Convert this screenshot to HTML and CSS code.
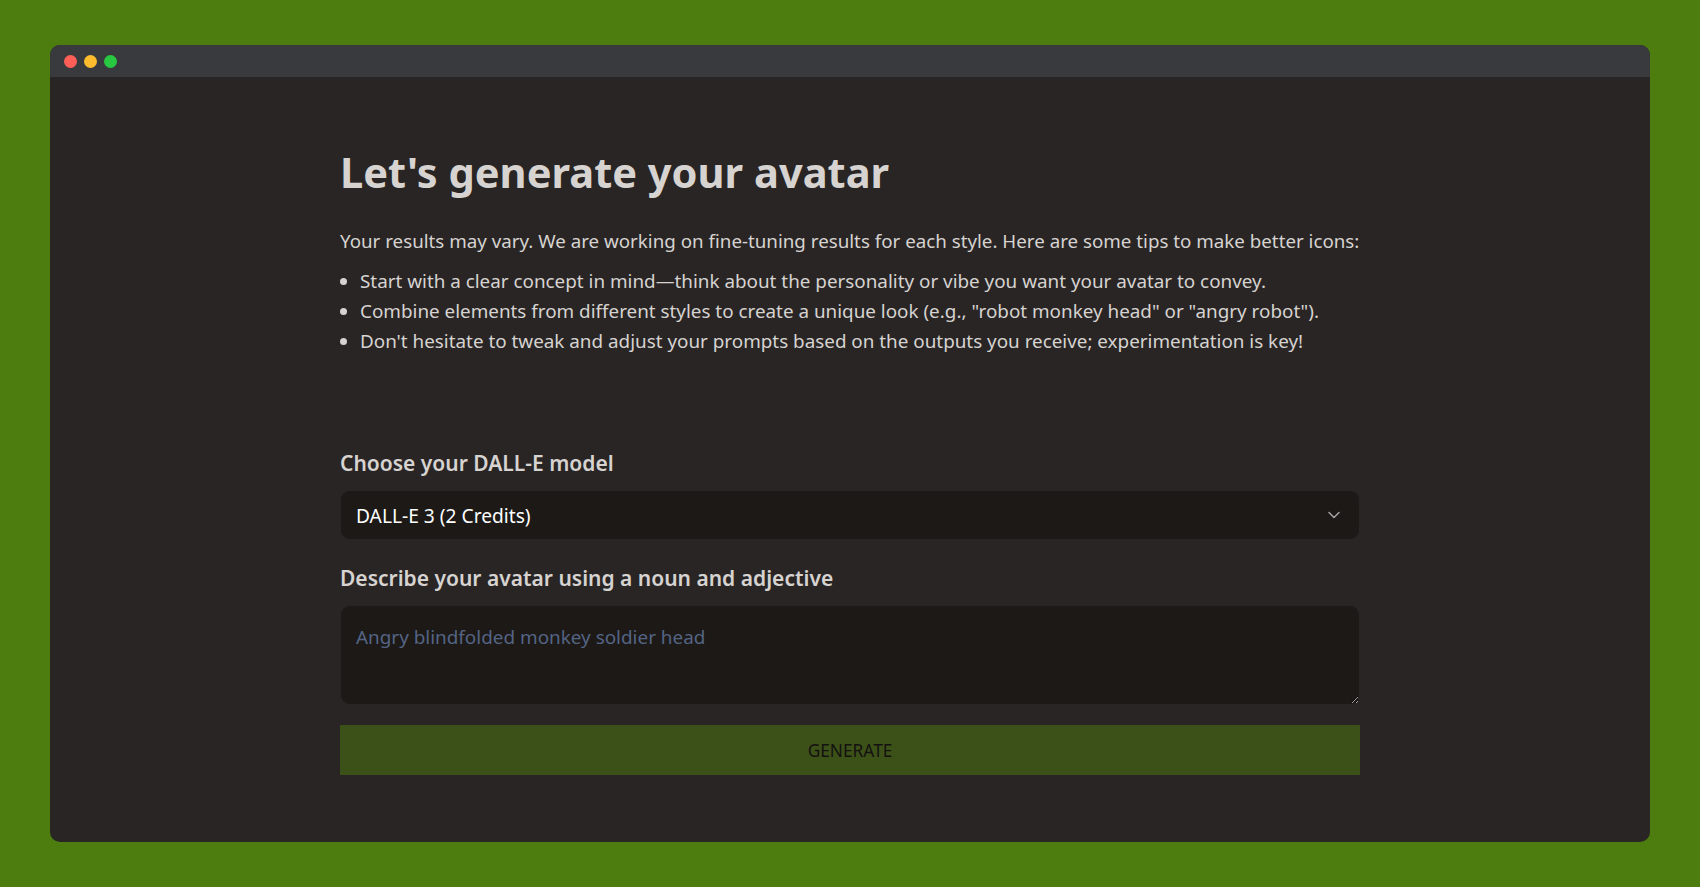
FILE: index.html
```html
<!DOCTYPE html>
<html lang="en">
<head>
  <meta charset="UTF-8" />
  <meta name="viewport" content="width=device-width, initial-scale=1.0"/>
  <title>Generate your avatar</title>
  <link rel="stylesheet" href="styles.css">
</head>
<body>
  <div class="window">
    <div class="title-bar">
      <span class="dot dot-red"></span>
      <span class="dot dot-yellow"></span>
      <span class="dot dot-green"></span>
    </div>
    <main class="content">
      <h1>Let's generate your avatar</h1>
      <p class="intro">Your results may vary. We are working on fine-tuning results for each style. Here are some tips to make better icons:</p>
      <ul class="tips">
        <li>Start with a clear concept in mind—think about the personality or vibe you want your avatar to convey.</li>
        <li>Combine elements from different styles to create a unique look (e.g., "robot monkey head" or "angry robot").</li>
        <li>Don't hesitate to tweak and adjust your prompts based on the outputs you receive; experimentation is key!</li>
      </ul>
      <form class="avatar-form">
        <label class="field-label" for="model">Choose your DALL-E model</label>
        <div class="select-wrap">
          <select id="model" class="model-select">
            <option>DALL-E 3 (2 Credits)</option>
            <option>DALL-E 2 (1 Credit)</option>
          </select>
          <svg class="select-arrow" width="20" height="20" viewBox="0 0 20 20" fill="none">
            <path d="M5 7.5l5 5 5-5" stroke="#a3a3a3" stroke-width="1.5" stroke-linecap="round" stroke-linejoin="round"/>
          </svg>
        </div>
        <label class="field-label" for="prompt">Describe your avatar using a noun and adjective</label>
        <textarea id="prompt" class="prompt" placeholder="Angry blindfolded monkey soldier head"></textarea>
        <button type="button" class="generate-btn" disabled>GENERATE</button>
      </form>
    </main>
  </div>
</body>
</html>
```

FILE: styles.css
```css
:root {
  --page: #4d7c0f;
  --window: #292524;
  --bar: #383a3d;
  --input: #1c1917;
  --text: #d6d3d1;
}

* {
  box-sizing: border-box;
  margin: 0;
  padding: 0;
}

html, body {
  height: 100%;
}

body {
  font-family: 'Noto Sans', 'Open Sans', sans-serif;
  background-color: var(--page);
  color: var(--text);
  padding: 45px 50px;
  overflow: hidden;
}

.window {
  height: 797px;
  background-color: var(--window);
  border-radius: 10px;
  overflow: hidden;
}

.title-bar {
  height: 32px;
  background-color: var(--bar);
  display: flex;
  align-items: center;
  gap: 7px;
  padding: 1px 0 0 13.5px;
}

.dot {
  width: 13px;
  height: 13px;
  border-radius: 50%;
}

.dot-red { background-color: #ff5f57; }
.dot-yellow { background-color: #febc2e; }
.dot-green { background-color: #28c840; }

.content {
  width: 1020px;
  margin: 0 auto;
  padding-top: 71px;
}

h1 {
  font-size: 41.6px;
  line-height: 48px;
  font-weight: 700;
  margin-bottom: 31px;
}

.intro {
  font-size: 18.75px;
  line-height: 28px;
  margin-bottom: 11px;
  white-space: nowrap;
}

.tips {
  font-size: 18.85px;
  line-height: 30px;
  padding-left: 20px;
  margin-bottom: 92px;
}

.field-label {
  display: block;
  font-size: 21px;
  line-height: 30px;
  font-weight: 600;
  margin-bottom: 12px;
}

.select-wrap {
  position: relative;
  margin-bottom: 23px;
}

.model-select {
  display: block;
  width: 100%;
  height: 50px;
  appearance: none;
  border: 1px solid var(--window);
  border-radius: 10px;
  background-color: var(--input);
  color: #fff;
  font-family: inherit;
  font-size: 19.2px;
  padding: 0 15px;
}

.select-arrow {
  position: absolute;
  right: 16px;
  top: 15px;
}

.prompt {
  display: block;
  width: 100%;
  height: 100px;
  border: 1px solid var(--window);
  border-radius: 10px;
  background-color: var(--input);
  color: #fff;
  font-family: inherit;
  font-size: 18.9px;
  line-height: 28px;
  padding: 17px 15px 0;
  margin-bottom: 20px;
}

.prompt::placeholder {
  color: #556484;
  opacity: 1;
}

.generate-btn {
  display: block;
  width: 100%;
  height: 50px;
  border: none;
  background-color: #3c5118;
  color: #141210;
  font-family: inherit;
  font-size: 17.3px;
}
```
